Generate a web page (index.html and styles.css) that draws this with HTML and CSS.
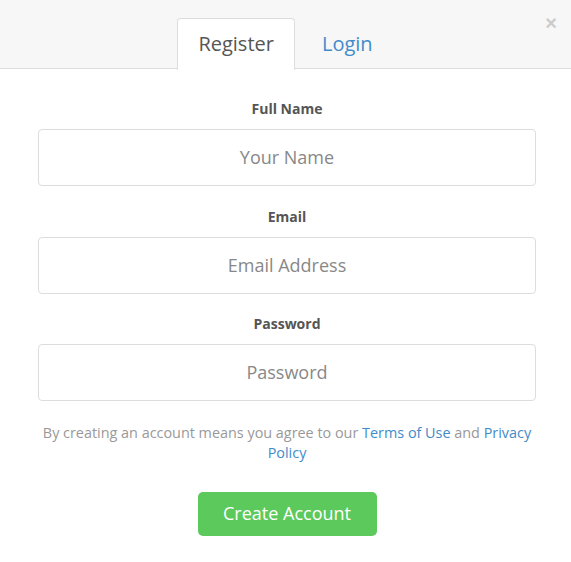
FILE: index.html
```html
<!DOCTYPE html>
<html lang="en">

<head>
    <meta charset="UTF-8">
    <meta name="viewport" content="width=device-width, initial-scale=1.0">
    <title>Register</title>
    <link rel="stylesheet" href="styles.css">
</head>

<body>
    <div class="modal-header">
        <ul class="tabs">
            <li class="tab active"><a href="#register">Register</a></li>
            <li class="tab"><a href="#login">Login</a></li>
        </ul>
        <button class="close" type="button">&times;</button>
    </div>

    <form class="register-form">
        <div class="field">
            <label for="name">Full Name</label>
            <input type="text" id="name" placeholder="Your Name">
        </div>
        <div class="field">
            <label for="email">Email</label>
            <input type="email" id="email" placeholder="Email Address">
        </div>
        <div class="field">
            <label for="password">Password</label>
            <input type="password" id="password" placeholder="Password">
        </div>
        <p class="terms">By creating an account means you agree to our <a href="#">Terms of Use</a> and <a href="#">Privacy Policy</a></p>
        <button class="submit" type="submit">Create Account</button>
    </form>
</body>

</html>
```

FILE: styles.css
```css
body {
    margin: 0;
    font-family: "Open Sans", sans-serif;
    background-color: #fff;
    color: #555;
}

.modal-header {
    position: relative;
    background-color: #f7f7f7;
    border-bottom: 1px solid #ddd;
    padding-top: 18px;
    height: 50px;
}

.tabs {
    display: flex;
    justify-content: center;
    gap: 6px;
    list-style: none;
    margin: 0;
    padding: 0;
    height: 51px;
}

.tab a {
    display: block;
    height: 50px;
    line-height: 50px;
    padding: 0 20px;
    font-size: 20px;
    color: #428bca;
    text-decoration: none;
    border: 1px solid transparent;
    border-bottom: none;
    border-radius: 4px 4px 0 0;
}

.tab.active a {
    background-color: #fff;
    color: #555;
    border-color: #ddd;
    height: 51px;
}

.close {
    position: absolute;
    top: 13px;
    right: 14px;
    background: none;
    border: none;
    padding: 0;
    font-size: 20px;
    font-weight: bold;
    line-height: 20px;
    color: #ccc;
    cursor: pointer;
}

.register-form {
    padding: 31px 35px 0 38px;
    text-align: center;
}

.field {
    margin-bottom: 21.5px;
}

.field label {
    display: block;
    font-size: 14px;
    font-weight: bold;
    line-height: 17px;
    margin-bottom: 12px;
}

.field input {
    display: block;
    box-sizing: border-box;
    width: 100%;
    height: 57px;
    padding-bottom: 2px;
    border: 1px solid #ddd;
    border-radius: 4px;
    font-family: inherit;
    font-size: 18px;
    text-align: center;
    color: #555;
}

.field input::placeholder {
    color: #888;
}

.terms {
    margin: 0;
    font-size: 14.4px;
    line-height: 20px;
    color: #999;
}

.terms a {
    color: #428bca;
    text-decoration: none;
}

.submit {
    margin-top: 29px;
    width: 179px;
    height: 44px;
    padding-bottom: 2px;
    background-color: #5cc95c;
    color: #fff;
    border: none;
    border-radius: 5px;
    font-family: inherit;
    font-size: 18px;
    cursor: pointer;
}
```
